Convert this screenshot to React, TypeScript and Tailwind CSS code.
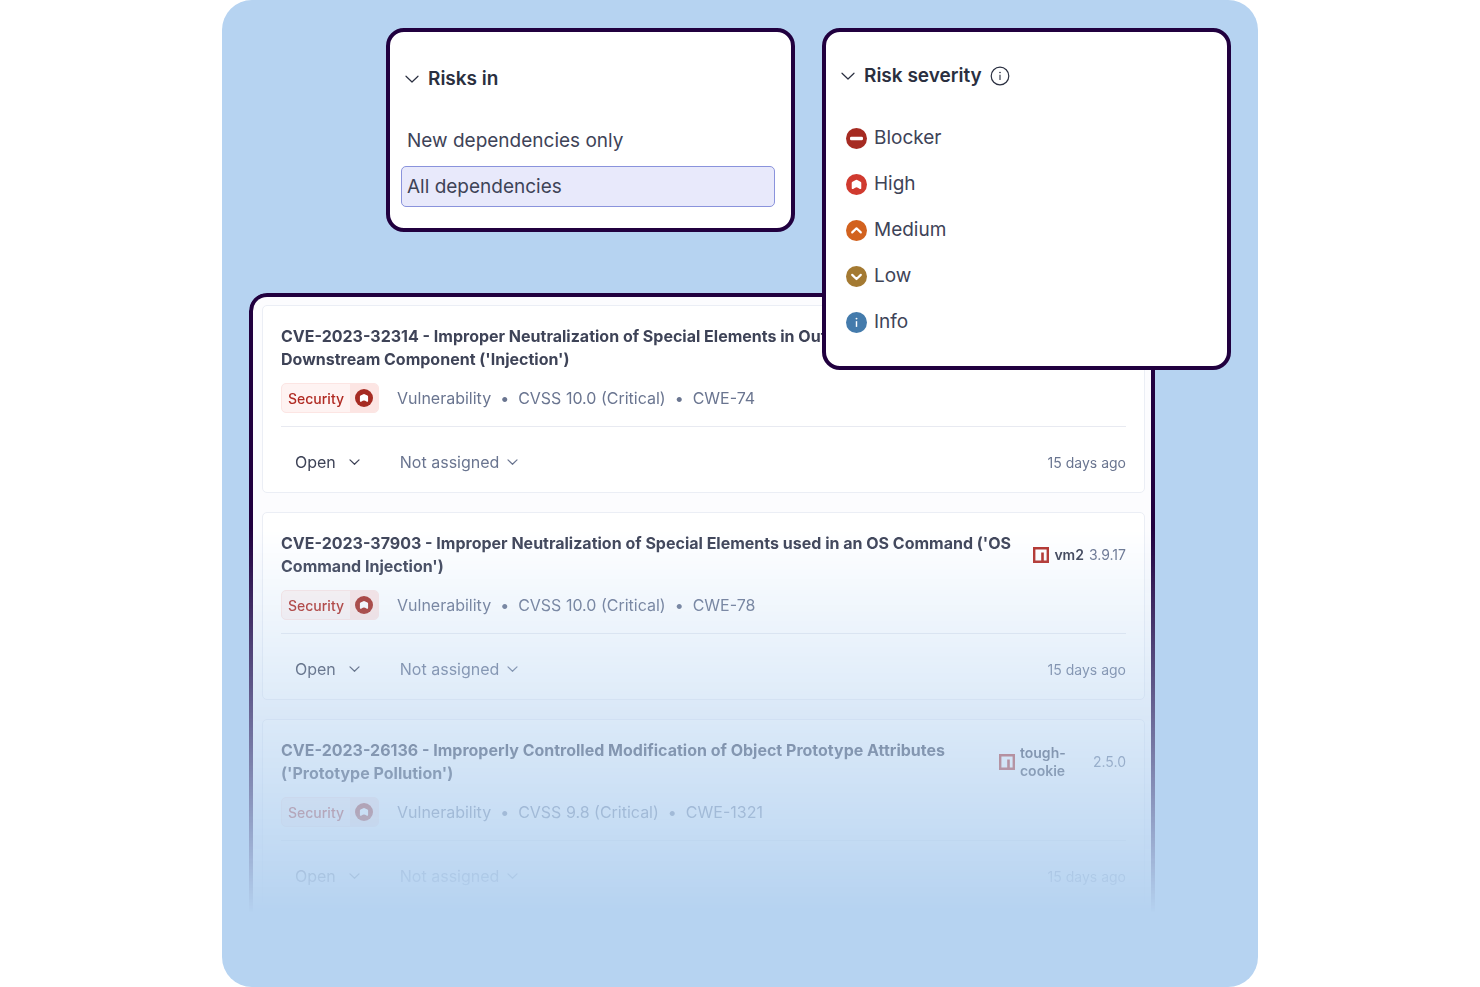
import React from "react";

type IconProps = { className?: string };

function Chevron({ className = "" }: IconProps) {
  return (
    <svg viewBox="0 0 14 8" fill="none" stroke="currentColor" strokeLinecap="round" strokeLinejoin="round" className={className} aria-hidden="true">
      <path d="M1 1.2 7 7 13 1.2" />
    </svg>
  );
}

function InfoOutline() {
  return (
    <svg viewBox="0 0 20 20" fill="none" className="size-5" aria-hidden="true">
      <circle cx="10" cy="10" r="8.8" stroke="currentColor" strokeWidth="1.2" />
      <path d="M10 8.8v5.200" stroke="currentColor" strokeWidth="1.1" />
      <circle cx="10" cy="6.5" r="0.8" fill="currentColor" />
    </svg>
  );
}

type Level = "blocker" | "high" | "medium" | "low" | "info";

function SeverityIcon({ level, className = "" }: { level: Level; className?: string }) {
  return (
    <svg viewBox="0 0 22 22" fill="none" className={className} aria-hidden="true">
      <circle cx="11" cy="11" r="11" fill="currentColor" />
      {level === "blocker" && <rect x="4.2" y="9.2" width="13.6" height="3.6" rx="1.4" fill="#fff" />}
      {level === "high" && (
        <path d="M10.200 6.300a1.600 1.600 0 0 1 1.600 0l3.400 1.700c.5.300.8.700.8 1.200v5.600c0 .8-.8 1.200-1.500.8l-2.100-1.200a2.800 2.800 0 0 0-2.800 0L7.500 15.600c-.7.4-1.500 0-1.500-.8V9.200c0-.5.300-.9.800-1.200z" fill="#fff" />
      )}
      {level === "medium" && <path d="M6.500 13 11 8.700l4.500 4.300" stroke="#fff" strokeWidth="2.300" strokeLinecap="round" strokeLinejoin="round" />}
      {level === "low" && <path d="M6.500 9.300 11 13.600l4.500-4.300" stroke="#fff" strokeWidth="2.300" strokeLinecap="round" strokeLinejoin="round" />}
      {level === "info" && (
        <>
          <path d="M11 9.600v6" stroke="#fff" strokeWidth="1.500" />
          <circle cx="11" cy="6.900" r="1" fill="#fff" />
        </>
      )}
    </svg>
  );
}

function NpmIcon() {
  return (
    <svg viewBox="0 0 16 16" className="size-4 shrink-0 text-[#b3312b]" aria-hidden="true">
      <path fillRule="evenodd" fill="currentColor" d="M0 0h16v16H0zM2.400 2.400v11.200h5.800V5.400h2.600v8.200h2.800V2.400z" />
    </svg>
  );
}

const severities: { level: Level; label: string; color: string }[] = [
  { level: "blocker", label: "Blocker", color: "text-[#a62b22]" },
  { level: "high", label: "High", color: "text-[#d03a2f]" },
  { level: "medium", label: "Medium", color: "text-[#d2621f]" },
  { level: "low", label: "Low", color: "text-[#a47a32]" },
  { level: "info", label: "Info", color: "text-[#447bac]" },
];

type Risk = {
  title: string;
  score: string;
  cwe: string;
  pkg?: { name: string; version: string; narrow?: boolean };
};

const risks: Risk[] = [
  {
    title:
      "CVE-2023-32314 - Improper Neutralization of Special Elements in Output Used by a Downstream Component ('Injection')",
    score: "CVSS 10.0 (Critical)",
    cwe: "CWE-74",
  },
  {
    title:
      "CVE-2023-37903 - Improper Neutralization of Special Elements used in an OS Command ('OS Command Injection')",
    score: "CVSS 10.0 (Critical)",
    cwe: "CWE-78",
    pkg: { name: "vm2", version: "3.9.17" },
  },
  {
    title:
      "CVE-2023-26136 - Improperly Controlled Modification of Object Prototype Attributes ('Prototype Pollution')",
    score: "CVSS 9.8 (Critical)",
    cwe: "CWE-1321",
    pkg: { name: "tough-cookie", version: "2.5.0", narrow: true },
  },
];

function RisksInPanel() {
  return (
    <section className="w-[409px] rounded-[18px] border-4 border-[#21003f] bg-white pt-8 pr-4 pb-[21px] pl-[11px]">
      <h2>
        <button type="button" className="flex h-[30px] items-center gap-[9px] pl-1 text-[19px] leading-[30px] font-semibold text-[#2a2f40]">
          <Chevron className="h-2 w-3.5 stroke-[1.2]" />
          Risks in
        </button>
      </h2>
      <div className="mt-[26px] flex flex-col gap-[5px] text-[19px] leading-[31px] text-[#3e4357]">
        <button type="button" className="h-[41px] rounded-[5px] border border-transparent px-[5px] text-left">
          New dependencies only
        </button>
        <button type="button" aria-pressed="true" className="h-[41px] rounded-[5px] border border-[#8a93dc] bg-[#e8e9fb] px-[5px] text-left">
          All dependencies
        </button>
      </div>
    </section>
  );
}

function SeverityPanel() {
  return (
    <section className="w-[409px] rounded-[18px] border-4 border-[#21003f] bg-white pt-[29px] pr-4 pb-[21px] pl-[15px]">
      <div className="flex h-[30px] items-center gap-2 text-[#2a2f40]">
        <h2>
          <button type="button" className="flex items-center gap-[9px] text-[19px] leading-[30px] font-semibold">
            <Chevron className="h-2 w-3.5 stroke-[1.2]" />
            Risk severity
          </button>
        </h2>
        <button type="button" aria-label="About risk severity">
          <InfoOutline />
        </button>
      </div>
      <ul className="mt-6 text-[19px] leading-[30px] text-[#3e4357]">
        {severities.map((s) => (
          <li key={s.level}>
            <button type="button" className="flex h-[46px] items-center gap-[7px] pl-[5px]">
              <SeverityIcon level={s.level} className={"size-[21px] " + s.color} />
              {s.label}
            </button>
          </li>
        ))}
      </ul>
    </section>
  );
}

function RiskCard({ risk }: { risk: Risk }) {
  return (
    <article className="rounded-[5px] border border-[#ebeef5] bg-white px-[18px] pt-[19px] pb-[18px]">
      <div className="flex items-center justify-between gap-[16px]">
        <h3 className="max-w-[740px] text-[16px] leading-[23px] font-bold text-[#3e4357]">{risk.title}</h3>
        {risk.pkg && (
          <div className="flex shrink-0 items-center gap-[5px] text-[14px] leading-[18px] text-[#6a7590]">
            <NpmIcon />
            <span className={risk.pkg.narrow ? "w-[68px] font-semibold text-[#3e4357]" : "font-semibold text-[#3e4357]"}>{risk.pkg.name}</span>
            <span>{risk.pkg.version}</span>
          </div>
        )}
      </div>
      <div className="mt-3 flex items-center gap-[18px] border-b border-[#e8eaf1] pb-[13px]">
        <span className="flex h-[30px] items-stretch overflow-hidden rounded-[5px] border border-[#fce5e3] bg-[#fef3f2] text-[14px] font-medium text-[#b02a22]">
          <span className="flex items-center px-[6px]">Security</span>
          <span className="flex w-7 items-center justify-center bg-[#fce5e3]">
            <SeverityIcon level="high" className="size-[18px] text-[#a62b22]" />
          </span>
        </span>
        <p className="flex items-center gap-[9px] text-[16px] text-[#6a7590]">
          <span>Vulnerability</span>
          <span>•</span>
          <span>{risk.score}</span>
          <span>•</span>
          <span>{risk.cwe}</span>
        </p>
      </div>
      <div className="mt-[23px] flex h-6 items-center pl-3.5 text-[16px]">
        <button type="button" className="flex items-center gap-[13px] text-[#3e4357]">
          Open
          <Chevron className="h-1.5 w-[11px] stroke-[1.6]" />
        </button>
        <button type="button" className="ml-10 flex items-center gap-2 text-[#6a7590]">
          Not assigned
          <Chevron className="h-1.5 w-[11px] stroke-[1.6]" />
        </button>
        <span className="ml-auto text-[14px] text-[#6a7590]">15 days ago</span>
      </div>
    </article>
  );
}

export default function App() {
  return (
    <main className="mx-auto min-h-screen w-[70%] min-w-[960px] rounded-[30px] bg-[#b6d3f1] px-[27px] pt-7 font-['Inter',sans-serif]">
      <div className="relative z-10 flex items-start justify-end gap-[27px]">
        <RisksInPanel />
        <SeverityPanel />
      </div>
      <section
        aria-label="Dependency risks"
        className="mt-[-77px] mr-[76px] flex flex-col gap-[19px] rounded-t-[18px] border-4 border-b-0 border-[#21003f] bg-[#fcfcfe] pt-2 pr-1.5 pb-1.5 pl-[9px] [mask-image:linear-gradient(to_bottom,black_38%,transparent_100%)]"
      >
        {risks.map((r) => (
          <RiskCard key={r.cwe} risk={r} />
        ))}
      </section>
    </main>
  );
}
